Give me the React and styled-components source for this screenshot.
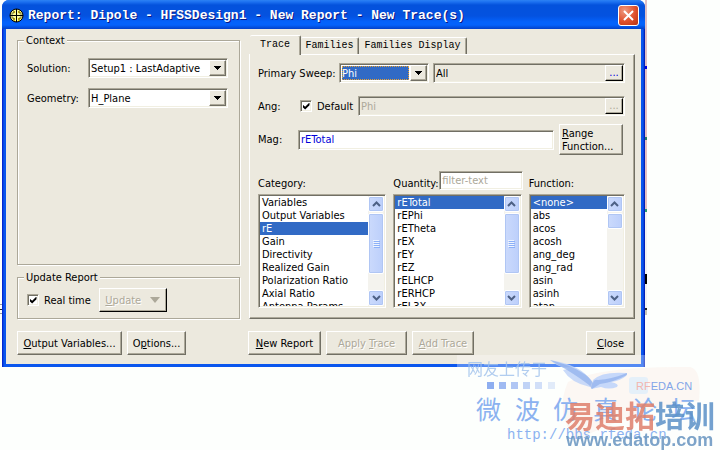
import React, { useState } from "react"
import styled, { createGlobalStyle, css } from "styled-components"

const GlobalStyle = createGlobalStyle`
    :root {
        --face: #ece9de;
        --shadow: #aca899;
        --dark: #716f64;
        --select: #316ac5;
        --ui: "DejaVu Sans Condensed", "Noto Sans", sans-serif;
        --mono: "Liberation Mono", monospace;
    }

    * {
        box-sizing: border-box;
    }

    body {
        margin: 0;
        background: #fdfffd;
        color: #000;
        font: 11px/13px var(--ui);
        overflow-x: hidden;
    }

    button, input, select {
        font: inherit;
        color: inherit;
        margin: 0;
        border-radius: 0;
    }
`

const raised = css`
    border: 1px solid;
    border-color: #fff var(--dark) var(--dark) #fff;
    box-shadow: inset -1px -1px 0 var(--shadow);
`

const sunken = css`
    border: 1px solid;
    border-color: var(--shadow) #fff #fff var(--shadow);
    box-shadow: inset 1px 1px 0 var(--dark), inset -1px -1px 0 #f1efe2;
`

const Desktop = styled.div`
    position: relative;
    display: flex;
    padding: 0 73px 83px 0;
`

const LeftEdge = styled.div`
    width: 2px;
    background: linear-gradient(transparent 304px, #999 304px 305px, transparent 305px 309px, #222 309px 310px, transparent 310px 313px, #999 313px 314px, transparent 314px);
`

const RightEdge = styled.div`
    width: 2px;
    background: linear-gradient(
        #dfbfc4 66px, #0000e0 66px 69px, #e4bfc1 69px 137px, #287a60 137px 140px,
        #e4bfc1 140px 209px, #2a9a70 209px 212px, #f2f2f2 212px 274px,
        #000 274px 284px, #f2f2f2 284px 308px, #222 308px 310px, #c8c5b8 310px 315px, transparent 315px
    );
`

const Dialog = styled.main`
    flex: 1;
    min-width: 0;
    background: linear-gradient(90deg, #0018c8, #0a56ee 2px, #0a56ee calc(100% - 2px), #0010a8);
    border-radius: 7px 7px 0 0;
    padding: 0 4px 3px;
`

const TitleBar = styled.header`
    display: flex;
    align-items: center;
    gap: 4px;
    height: 29px;
    margin: 0 -4px;
    padding: 2px 6px 0 7px;
    border-radius: 7px 7px 0 0;
    background: linear-gradient(#2d82f4, #1c70f0 2px, #0452dc 5px, #0452e0 16px, #0462fb 22px, #0462fb 25px, #0340c8 29px);

    h1 {
        flex: 1;
        margin: 0;
        color: #fff;
        font: bold 13px/16px var(--mono);
        text-shadow: 1px 1px 0 #0a1883;
        white-space: pre;
        overflow: hidden;
    }
`

const CloseBox = styled.button`
    width: 21px;
    height: 21px;
    padding: 0;
    display: grid;
    place-items: center;
    border: 1px solid #fff;
    border-radius: 3px;
    background: radial-gradient(circle at 30% 25%, #ee9a80, #e0502c 55%, #b83210);
`

const Body = styled.div`
    background: var(--face);
    padding: 5px 6px 9px 11px;
`

const Columns = styled.div`
    display: grid;
    grid-template-columns: 223px minmax(0, 1fr);
    column-gap: 9px;
`

const Side = styled.div`
    display: flex;
    flex-direction: column;
    gap: 6px;
`

const Group = styled.fieldset`
    min-width: 0;
    margin: 0;
    padding: 0;
    flex: ${({ $grow }) => $grow ? 1 : "none"};
    border: 1px solid var(--shadow);
    box-shadow: 1px 1px 0 #fff, inset 1px 1px 0 #fff;

    legend {
        margin-left: 6px;
        padding: 0 2px;
        background: var(--face);
    }
`

const Fields = styled.div`
    display: grid;
    grid-template-columns: 61px 1fr;
    align-items: center;
    row-gap: 10px;
    padding: 11px 11px 0 9px;
`

const SelectFrame = styled.div`
    ${sunken}
    display: grid;
    grid-template-columns: 1fr 17px;
    height: 20px;
    padding: 1px;
    background: #fff;

    select {
        grid-area: 1 / 1 / 2 / 3;
        min-width: 0;
        appearance: none;
        border: 0;
        padding: 0 20px 0 1px;
        background: none;
        outline: none;
    }

    ${({ $active }) => $active && css`
        select {
            grid-area: 1 / 1 / 2 / 2;
            margin: 1px;
            padding: 0;
            color: #fff;
            background: var(--select);
            outline: 1px dotted #e8a030;
            outline-offset: -1px;
        }
    `}
`

const ArrowBox = styled.span`
    ${raised}
    grid-area: 1 / 2;
    display: grid;
    place-items: center;
    background: var(--face);
    pointer-events: none;
`

const CheckLabel = styled.label`
    display: flex;
    align-items: center;
    gap: 5px;

    input {
        ${sunken}
        appearance: none;
        width: 12px;
        height: 12px;
        background: #fff;
        display: grid;
        place-items: center;
    }

    input:checked::after {
        content: "";
        width: 7px;
        height: 7px;
        background: #000;
        clip-path: polygon(0 28%, 38% 62%, 100% 0, 100% 40%, 38% 100%, 0 66%);
    }
`

const Button = styled.button`
    ${raised}
    height: ${({ $tall }) => $tall ? "31px" : "24px"};
    width: ${({ $width }) => $width}px;
    padding: 0 2px;
    background: var(--face);
    text-align: ${({ $tall }) => $tall ? "left" : "center"};
    white-space: nowrap;

    &:disabled {
        color: var(--shadow);
        text-shadow: 1px 1px 0 #fff;
    }
`

const RangeButton = styled(Button)`
    margin-left: 5px;
`

const UpdateButton = styled(Button)`
    display: flex;
    align-items: center;
    justify-content: center;
    gap: 9px;
    border-color: #fff #000 #000 #fff;
`

const UpdateRow = styled.div`
    display: flex;
    align-items: center;
    gap: 8px;
    padding: 4px 9px 6px;
`

const TabList = styled.div`
    display: flex;
    align-items: flex-end;
    height: 20px;
    padding-left: 1px;
`

const Tab = styled.button`
    height: ${({ $active }) => $active ? 20 : 17}px;
    width: ${({ $width }) => $width}px;
    margin-bottom: ${({ $active }) => $active ? -1 : 0}px;
    padding: 0 0 ${({ $active }) => $active ? 2 : 0}px;
    border: 0;
    border-top: 1px solid #fff;
    border-right: 1px solid var(--dark);
    box-shadow: inset -1px 0 0 var(--shadow);
    background: var(--face);
    font: 10px/12px var(--mono);
    border-radius: 2px 2px 0 0;
    white-space: nowrap;
`

const Panel = styled.section`
    border: 1px solid;
    border-color: #fff var(--dark) var(--dark) #fff;
    box-shadow: inset -1px -1px 0 var(--shadow);
    padding: 8px 9px 10px 8px;
`

const Row = styled.div`
    display: grid;
    grid-template-columns: ${({ $cols }) => $cols};
    align-items: center;
    margin-bottom: ${({ $after }) => $after}px;
`

const EntryFrame = styled.div`
    ${sunken}
    display: flex;
    min-width: 0;
    height: 20px;
    padding: 1px;
    background: ${({ $white }) => $white ? "#fff" : "var(--face)"};

    input {
        flex: 1;
        min-width: 0;
        border: 0;
        padding: 0 1px;
        background: none;
        color: ${({ $color }) => $color || "#000"};
        outline: none;
    }

    input::placeholder {
        color: var(--shadow);
        opacity: 1;
    }
`

const SweepFrame = styled(EntryFrame)`
    margin-left: 4px;
`

const Dots = styled.button`
    ${raised}
    width: 18px;
    padding: 0;
    border-color: #fff #000 #000 #fff;
    background: var(--face);
    color: #0000e0;
    line-height: 10px;

    &:disabled {
        color: var(--shadow);
    }
`

const Lists = styled.div`
    display: grid;
    grid-template-columns: minmax(0, 4fr) minmax(0, 4fr) minmax(0, 3fr);
    column-gap: 7px;
`

const ListHead = styled.div`
    display: flex;
    align-items: center;
    height: 19px;
    margin-bottom: 4px;

    > :first-child {
        flex: none;
        min-width: 46px;
        padding-top: 5px;
    }

    > div {
        flex: 1;
        height: 19px;
        margin-right: -1px;
    }
`

const ListFrame = styled.div`
    ${sunken}
    display: flex;
    height: 114px;
    padding: 1px;
    background: #fff;

    ul {
        flex: 1;
        min-width: 0;
        margin: 0;
        padding: 0;
        list-style: none;
        overflow: hidden;
    }
`

const Option = styled.li`
    height: 13px;
    padding-left: 2px;
    line-height: 14px;
    white-space: nowrap;
    cursor: default;
    color: ${({ $on }) => $on ? "#fff" : "#000"};
    background: ${({ $on }) => $on ? "var(--select)" : "transparent"};
`

const ScrollTrack = styled.div`
    display: flex;
    flex-direction: column;
    width: 16px;
    gap: 1px;
    background: #f4f3ee;
`

const ScrollPart = styled.span`
    display: grid;
    place-items: center;
    flex: none;
    height: ${({ $height }) => $height}px;
    margin-top: ${({ $last }) => $last ? "auto" : 0};
    border: 1px solid #fff;
    border-radius: 2px;
    box-shadow: inset 0 0 0 1px #b0c6f4;
    background: linear-gradient(90deg, #cbdafc, #bccffb);
`

const Footer = styled.footer`
    display: grid;
    grid-template-columns: 222px minmax(0, 1fr);
    column-gap: 9px;
    margin-top: 12px;

    div {
        display: flex;
        gap: 5px;
    }

    div > :last-child:nth-child(4) {
        margin-left: auto;
    }
`

const Watermark = styled.svg`
    position: absolute;
    right: 0;
    top: 355px;
    pointer-events: none;
    font-family: "Noto Sans CJK SC", sans-serif;
`

const DownArrow = () => (
    <svg width="7" height="4" viewBox="0 0 7 4" shapeRendering="crispEdges">
        <path d="M0 0h7v1H6v1H5v1H4v1H3V3H2V2H1V1H0z" />
    </svg>
)

const WindowIcon = () => (
    <svg width="15" height="15" viewBox="0 0 15 15" fill="none">
        <circle cx="7.5" cy="7.5" r="6.5" fill="#ffff9c" stroke="#000" />
        <path d="M5.5 2.5v2h-2M9.500 2.500v2h2M3.500 10.500h2v2M11.500 10.500h-2v2" stroke="#f4d800" shapeRendering="crispEdges" />
        <path d="M7.500 1v13M1 7.500h13" stroke="#000" shapeRendering="crispEdges" />
        <path d="M4 3h1v2H3v2M11 3h-1v2h2v2M4 12h1v-2H3V8M11 12h-1v-2h2V8" stroke="#3a3810" strokeWidth=".6" />
    </svg>
)

const Select = ({ active, children, ...props }) => (
    <SelectFrame $active={active}>
        <select {...props}>{children}</select>
        <ArrowBox><DownArrow /></ArrowBox>
    </SelectFrame>
)

const Chevron = ({ down }) => (
    <svg width="9" height="6" viewBox="0 0 9 6" fill="none" stroke="#4d6185" strokeWidth="2">
        <path d={down ? "M1 1l3.5 3.5L8 1" : "M1 5l3.5-3.5L8 5"} />
    </svg>
)

const ListBox = ({ label, items, initial, thumb }) => {
    const [selected, setSelected] = useState(initial)

    return (
        <ListFrame>
            <ul role="listbox" aria-label={label}>
                {items.map(item => (
                    <Option key={item} role="option" aria-selected={item === selected} $on={item === selected} onClick={() => setSelected(item)}>
                        {item}
                    </Option>
                ))}
            </ul>
            <ScrollTrack aria-hidden="true">
                <ScrollPart $height={16}><Chevron /></ScrollPart>
                <ScrollPart $height={thumb}>
                    {thumb > 20 && (
                        <svg width="7" height="8" shapeRendering="crispEdges">
                            <path d="M0 .5h6M0 2.5h6M0 4.5h6M0 6.5h6" stroke="#eef4fe" />
                            <path d="M1 1.5h6M1 3.5h6M1 5.5h6M1 7.5h6" stroke="#8cb0f8" />
                        </svg>
                    )}
                </ScrollPart>
                <ScrollPart $height={16} $last><Chevron down /></ScrollPart>
            </ScrollTrack>
        </ListFrame>
    )
}

const categories = ["Variables", "Output Variables", "rE", "Gain", "Directivity", "Realized Gain", "Polarization Ratio", "Axial Ratio", "Antenna Params"]
const quantities = ["rETotal", "rEPhi", "rETheta", "rEX", "rEY", "rEZ", "rELHCP", "rERHCP", "rEL3X"]
const functions = ["<none>", "abs", "acos", "acosh", "ang_deg", "ang_rad", "asin", "asinh", "atan"]

const tabs = [
    { name: "Trace", width: 51 },
    { name: "Families", width: 58 },
    { name: "Families Display", width: 108 },
]

const SiteMark = () => (
    <Watermark width="264" height="95" viewBox="0 0 264 95">
        <path d="M1 0H264V95H1z" fill="#fff" opacity=".3" />
        <path d="M112 27q32-16 122-15 12 2 9 34-50 4-123 39-22-28-8-58z" fill="#fbeae4" opacity=".4" />
        {/* bird */}
        <path d="M94 5q32 5 42 22l-2 5q-19-4-27-17l5-1q-12-3-18-9z" fill="#c0d4f8" opacity=".85" />
        <path d="M137 25q9-9 34-7l-1 3q-6 5-15 6 9 2 6 5-8 3-16 0l-10 2z" fill="#c6d8fa" />
        <path d="M94 5q20 5 31 12 9 5 12 11 1-4 5-3 14-1 29-7v2q-13 7-27 9l-8 5-3-4q-9-7-22-15z" fill="#86a8ea" opacity=".6" />
        <rect x="173" y="22" width="19" height="17" rx="3" fill="#dcecfb" opacity=".7" />
        <text x="11" y="20" fontSize="16" fill="#9fc1ec" opacity=".8">网友上传于</text>
        {[31, 43, 55, 67, 79, 92].map((x, i) => (
            <rect key={x} x={x} y="27" width="7" height="7" fill="#8eaef0" opacity={1 - i * .15} />
        ))}
        <text x="180" y="35" fontSize="11" fontFamily="Liberation Sans, sans-serif" fill="#83a5e8">
            <tspan fill="#f3b5ae">RF</tspan>EDA.CN
        </text>
        <text x="20 59 97 137 176 215" y="64" fontSize="25" fill="#8bb2f0">微波仿真论坛</text>
        <text x="51" y="84" fontSize="14" fontFamily="Liberation Mono, monospace" fill="#8bb2f0">http://bbs.rfeda.cn</text>
        <g opacity=".85" fontWeight="bold">
            <text x="109" y="72" fontSize="30" fill="#df806c">易迪拓<tspan fill="#5b91c8">培训</tspan></text>
            <text x="110" y="91" fontSize="18" fontFamily="Liberation Sans, sans-serif" fill="#6795c0">www.edatop.com</text>
        </g>
    </Watermark>
)

const App = () => {
    const [tab, setTab] = useState("Trace")

    return (
        <>
            <GlobalStyle />
            <Desktop>
                <LeftEdge />
                <Dialog>
                    <TitleBar>
                        <WindowIcon />
                        <h1>Report: Dipole - HFSSDesign1 - New Report - New Trace(s)</h1>
                        <CloseBox aria-label="Close window">
                            <svg width="11" height="11" viewBox="0 0 11 11" stroke="#fff" strokeWidth="2">
                                <path d="M1 1l9 9M10 1l-9 9" />
                            </svg>
                        </CloseBox>
                    </TitleBar>
                    <Body>
                        <Columns>
                            <Side>
                                <Group $grow>
                                    <legend>Context</legend>
                                    <Fields>
                                        <label htmlFor="solution">Solution:</label>
                                        <Select id="solution"><option>Setup1 : LastAdaptive</option></Select>
                                        <label htmlFor="geometry">Geometry:</label>
                                        <Select id="geometry"><option>H_Plane</option></Select>
                                    </Fields>
                                </Group>
                                <Group>
                                    <legend>Update Report</legend>
                                    <UpdateRow>
                                        <CheckLabel><input type="checkbox" defaultChecked />Real time</CheckLabel>
                                        <UpdateButton disabled $width={68}>
                                            <span><u>U</u>pdate</span>
                                            <svg width="10" height="6"><path d="M0 0h10L5 6z" fill="#aca899" /></svg>
                                        </UpdateButton>
                                    </UpdateRow>
                                </Group>
                            </Side>
                            <div>
                                <TabList role="tablist">
                                    {tabs.map(({ name, width }) => (
                                        <Tab key={name} role="tab" aria-selected={tab === name} $active={tab === name} $width={width} onClick={() => setTab(name)}>
                                            {name}
                                        </Tab>
                                    ))}
                                </TabList>
                                <Panel>
                                    <Row $cols="81px 90px 1fr" $after={13}>
                                        <label htmlFor="sweep">Primary Sweep:</label>
                                        <Select id="sweep" active><option>Phi</option></Select>
                                        <SweepFrame>
                                            <input aria-label="Sweep values" defaultValue="All" />
                                            <Dots>...</Dots>
                                        </SweepFrame>
                                    </Row>
                                    <Row $cols="42px 58px 1fr" $after={8}>
                                        <label htmlFor="angle">Ang:</label>
                                        <CheckLabel><input type="checkbox" defaultChecked />Default</CheckLabel>
                                        <EntryFrame $color="var(--shadow)">
                                            <input id="angle" disabled defaultValue="Phi" />
                                            <Dots disabled>...</Dots>
                                        </EntryFrame>
                                    </Row>
                                    <Row $cols="40px 1fr 71px" $after={16}>
                                        <label htmlFor="mag">Mag:</label>
                                        <EntryFrame $white $color="#0000d8">
                                            <input id="mag" defaultValue="rETotal" />
                                        </EntryFrame>
                                        <RangeButton $tall $width={64}><u>R</u>ange<br />Function...</RangeButton>
                                    </Row>
                                    <Lists>
                                        <div>
                                            <ListHead><span>Category:</span></ListHead>
                                            <ListBox label="Category" items={categories} initial="rE" thumb={61} />
                                        </div>
                                        <div>
                                            <ListHead>
                                                <label htmlFor="filter">Quantity:</label>
                                                <EntryFrame $white><input id="filter" placeholder="filter-text" /></EntryFrame>
                                            </ListHead>
                                            <ListBox label="Quantity" items={quantities} initial="rETotal" thumb={61} />
                                        </div>
                                        <div>
                                            <ListHead><span>Function:</span></ListHead>
                                            <ListBox label="Function" items={functions} initial="<none>" thumb={16} />
                                        </div>
                                    </Lists>
                                </Panel>
                            </div>
                        </Columns>
                        <Footer>
                            <div>
                                <Button $width={105}><u>O</u>utput Variables...</Button>
                                <Button $width={59}>O<u>p</u>tions...</Button>
                            </div>
                            <div>
                                <Button $width={73}><u>N</u>ew Report</Button>
                                <Button $width={81} disabled>Apply <u>T</u>race</Button>
                                <Button $width={62} disabled><u>A</u>dd Trace</Button>
                                <Button $width={49}><u>C</u>lose</Button>
                            </div>
                        </Footer>
                    </Body>
                </Dialog>
                <RightEdge />
                <SiteMark />
            </Desktop>
        </>
    )
}

export default App
